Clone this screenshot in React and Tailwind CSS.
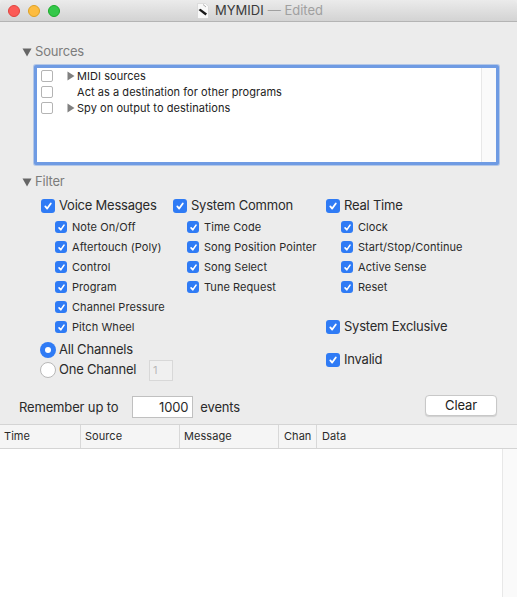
const font = 'font-["Inter","Liberation_Sans",sans-serif]';

const Check = ({ big }) => (
  <span className={`flex shrink-0 items-center justify-center bg-[#2f7bf5] ${big ? 'h-[14px] w-[14px] rounded-[3px]' : 'h-3 w-3 rounded-[3px]'}`}>
    <svg width={big ? 10 : 9} height={big ? 10 : 9} viewBox="0 0 10 10" fill="none" stroke="#fff" strokeWidth="1.8" strokeLinecap="round" strokeLinejoin="round">
      <path d="M2.3 5.4 4.2 7.6 7.8 2.4" />
    </svg>
  </span>
);

const Head = ({ label }) => (
  <div className="flex h-5 items-center gap-[4px] text-[13px] tracking-[-0.22px] text-[#2a2a2a]">
    <Check big />
    <span>{label}</span>
  </div>
);

const Sub = ({ label, wide }) => (
  <div className={`flex h-5 items-center gap-[5px] text-[11px] tracking-[0.06px] text-[#2a2a2a] ${wide ? 'pl-[15px]' : 'pl-[14px]'}`}>
    <Check />
    <span>{label}</span>
  </div>
);

const Disclosure = ({ label }) => (
  <div className="flex h-4 items-center gap-[3px] text-[13px] tracking-[-0.2px] text-[#7c7c7c]">
    <svg width="10" height="10" viewBox="0 0 10 10" fill="#666">
      <path d="M0.5 1.5h9L5 9.5z" />
    </svg>
    <span>{label}</span>
  </div>
);

const SourceRow = ({ label, arrow }) => (
  <div className="flex h-4 items-center text-[11px] tracking-[0.05px] text-[#222]">
    <span className="h-3 w-3 shrink-0 rounded-[2px] border border-[#b4b4b4] bg-white" />
    <span className="flex w-[23px] shrink-0 justify-end pr-[1px]">
      {arrow && (
        <svg width="8" height="10" viewBox="0 0 8 10" fill="#808080">
          <path d="M0.5 0.5v9L7.5 5z" />
        </svg>
      )}
    </span>
    <span className="pl-[1px]">{label}</span>
  </div>
);

const Column = ({ label, w, border, inset }) => (
  <div className={`flex h-full shrink-0 items-center ${inset ? 'pl-[5px]' : 'pl-[4px]'} ${border ? 'border-r border-[#d8d8d8]' : ''} ${w}`}>{label}</div>
);

export default function App() {
  return (
    <div className={`flex h-[597px] w-[517px] flex-col overflow-hidden bg-[#ececec] ${font}`}>
      {/* title bar */}
      <div className="relative flex h-[22px] shrink-0 items-center justify-center rounded-t-[5px] border-b border-[#b4b4b4] bg-gradient-to-b from-[#ebebeb] to-[#d3d3d3] pl-[3px] text-[13px]">
        <div className="absolute left-[8px] top-[5px] flex gap-[8px]">
          <span className="h-3 w-3 rounded-full border border-[#e0443e] bg-[#fc5b57]" />
          <span className="h-3 w-3 rounded-full border border-[#dea123] bg-[#fdbc40]" />
          <span className="h-3 w-3 rounded-full border border-[#1aab29] bg-[#34c84a]" />
        </div>
        <svg className="mr-[6px]" width="12" height="16" viewBox="0 0 12 16">
          <path d="M0.5 0.5h8l3 3v12h-11z" fill="#f8f8f8" stroke="#c8c8c8" strokeWidth="0.5" />
          <path d="M6 1.5 9 4" stroke="#999" strokeWidth="0.8" fill="none" />
          <path d="M1.5 7 3.5 5.8 10 10.5 8.5 12.5z" fill="#1a1a1a" />
        </svg>
        <span className="text-[#3a3a3a]">MYMIDI</span>
        <span className="ml-[4px] text-[#a0a0a0]">— Edited</span>
      </div>

      {/* sources */}
      <div className="pl-[22px] pt-[22px]">
        <Disclosure label="Sources" />
      </div>
      <div className="ml-[34px] mt-[5px] flex h-[100px] w-[465px] shrink-0 rounded-[2px] border-[3px] border-[#6f9be3] bg-white shadow-[0_0_0_1px_rgba(111,155,227,0.45)]">
        <div className="flex-1 pl-[4px]">
          <SourceRow label="MIDI sources" arrow />
          <SourceRow label="Act as a destination for other programs" />
          <SourceRow label="Spy on output to destinations" arrow />
        </div>
        <div className="w-[15px] border-l border-[#e8e8e8] bg-[#fafafa]" />
      </div>

      {/* filter */}
      <div className="pl-[22px] pt-[9px]">
        <Disclosure label="Filter" />
      </div>
      <div className="grid grid-cols-[132px_153px_1fr] pl-[41px] pt-[6px]">
        <div>
          <Head label="Voice Messages" />
          <div className="pt-[1px]">
            {['Note On/Off', 'Aftertouch (Poly)', 'Control', 'Program', 'Channel Pressure', 'Pitch Wheel'].map((s) => (
              <Sub key={s} label={s} />
            ))}
          </div>
          <div className="mt-[2px] flex h-5 items-center gap-[3px] pt-[2px] text-[13px] tracking-[-0.2px] text-[#2a2a2a]">
            <span className="-ml-[1px] flex h-4 w-4 items-center justify-center rounded-full bg-[#2f7bf5]">
              <span className="h-[6px] w-[6px] rounded-full bg-white" />
            </span>
            <span>All Channels</span>
          </div>
          <div className="mt-[1px] flex h-5 items-center gap-[3px] text-[13px] tracking-[-0.2px] text-[#2a2a2a]">
            <span className="-ml-[1px] h-4 w-4 rounded-full border border-[#b8b8b8] bg-white" />
            <span>One Channel</span>
            <span className="ml-auto flex h-[21px] w-6 items-center border border-[#d8d8d8] bg-[#f0f0f0] pl-[3px] text-[11px] text-[#b8b8b8]">1</span>
          </div>
        </div>
        <div>
          <Head label="System Common" />
          <div className="pt-[1px]">
            {['Time Code', 'Song Position Pointer', 'Song Select', 'Tune Request'].map((s) => (
              <Sub key={s} label={s} />
            ))}
          </div>
        </div>
        <div>
          <Head label="Real Time" />
          <div className="pt-[1px]">
            {['Clock', 'Start/Stop/Continue', 'Active Sense', 'Reset'].map((s) => (
              <Sub key={s} label={s} wide />
            ))}
          </div>
          <div className="pt-[20px]">
            <Head label="System Exclusive" />
          </div>
          <div className="pt-[13px]">
            <Head label="Invalid" />
          </div>
        </div>
      </div>

      {/* remember row */}
      <div className="flex items-center pl-[19px] pr-[20px] pt-[15px] text-[13px] tracking-[-0.15px] text-[#2a2a2a]">
        <span className="pt-[2px]">Remember up to</span>
        <span className="ml-[14px] flex h-[22px] w-[61px] items-center justify-end border border-[#c0c0c0] bg-white pr-[4px] pt-[2px]">1000</span>
        <span className="ml-[7px] pt-[2px]">events</span>
        <button className="mb-[2px] ml-auto h-[21px] w-[72px] rounded-[4px] border border-[#c8c8c8] bg-white text-[13px] text-[#222] shadow-[0_1px_1px_rgba(0,0,0,0.12)]">Clear</button>
      </div>

      {/* table */}
      <div className="mt-[6px] flex min-h-0 flex-1 flex-col bg-white">
        <div className="flex h-[25px] shrink-0 items-center border-y border-[#d4d4d4] bg-[#f5f5f5] text-[11px] tracking-[0.05px] text-[#2a2a2a]">
          <Column label="Time" w="w-[81px]" border />
          <Column label="Source" w="w-[99px]" border />
          <Column label="Message" w="w-[99px]" border />
          <Column label="Chan" w="w-[38px]" border inset />
          <Column label="Data" w="flex-1" inset />
        </div>
        <div className="flex flex-1 justify-end">
          <div className="w-[15px] border-l border-[#e8e8e8] bg-[#fafafa]" />
        </div>
      </div>
    </div>
  );
}
